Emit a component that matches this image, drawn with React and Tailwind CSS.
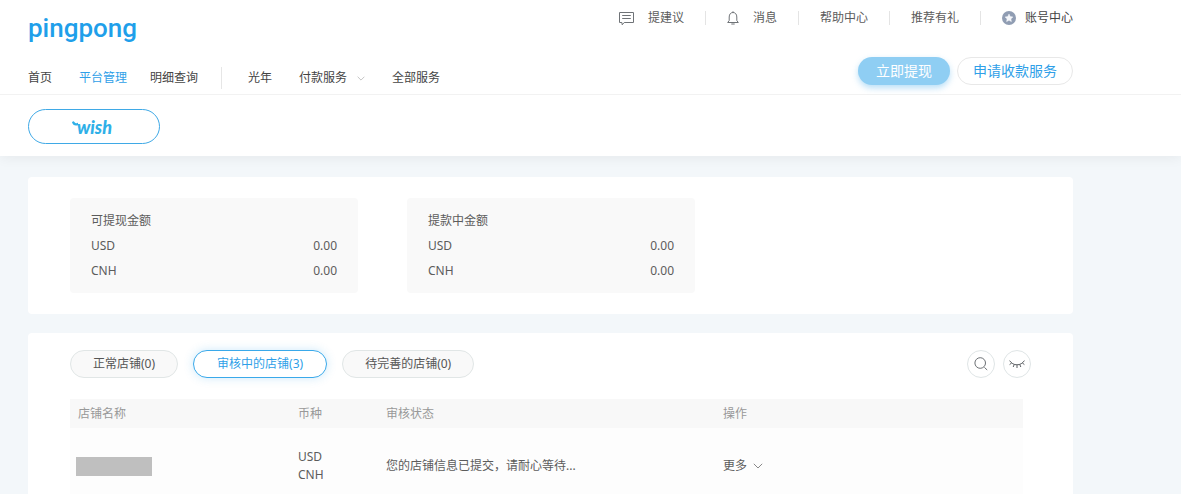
import React from "react";

const Divider = ({ tall }) => (
  <span className={tall ? "h-[22px] w-px bg-[#e6e6e6]" : "h-3.5 w-px bg-[#e4e4e4]"} />
);

const Chevron = ({ className }) => (
  <svg viewBox="0 0 10 6" className={className} fill="none" stroke="currentColor" strokeWidth="1" aria-hidden="true">
    <path d="M0.8 0.8 5 5 9.2 0.8" />
  </svg>
);

const FeedbackIcon = () => (
  <svg viewBox="0 0 15 15" className="h-[15px] w-[15px]" fill="none" stroke="#6f7377" strokeWidth="1" aria-hidden="true">
    <path d="M0.5 1.5h14v10H5.2L3.2 13.8 2.9 11.5H0.5z" />
    <path d="M3.2 4.500h8.600M3.2 7.500h8.600" />
  </svg>
);

const BellIcon = () => (
  <svg viewBox="0 0 12 14" className="h-3.5 w-3" fill="none" stroke="#6f7377" strokeWidth="1" aria-hidden="true">
    <path d="M6 0.3v1.2M2.2 9.500V6C2.2 3.200 3.8 1.500 6 1.500S9.8 3.200 9.8 6v3.500L11.300 11.500H0.700L2.200 9.500zM4.300 13h3.400" />
  </svg>
);

const StarBadge = () => (
  <svg viewBox="0 0 14 14" className="h-3.5 w-3.5" aria-hidden="true">
    <circle cx="7" cy="7" r="7" fill="#909db3" />
    <path
      d="M7 3.1 8.2 5.6 10.9 6 8.9 7.9 9.4 10.6 7 9.3 4.6 10.6 5.1 7.9 3.1 6 5.8 5.6z"
      fill="#f4f6fa"
      stroke="#f4f6fa"
      strokeWidth="0.5"
      strokeLinejoin="round"
    />
  </svg>
);

const SearchIcon = () => (
  <svg viewBox="0 0 14 14" className="h-3.5 w-3.5" fill="none" stroke="#6c7074" strokeWidth="1" aria-hidden="true">
    <circle cx="6.2" cy="6" r="5.3" />
    <path d="M10.4 10.4 13.2 13" />
  </svg>
);

const ClosedEyeIcon = () => (
  <svg viewBox="0 0 16 10" className="h-2.5 w-4" fill="none" stroke="#5c6064" strokeWidth="1" aria-hidden="true">
    <path d="M0.6 1.600C2.4 4.400 5 5.800 8 5.800s5.600-1.400 7.400-4.200M2.700 3.900 0.600 5.600M5.300 5.300 4.200 8M8 5.800v3.200M10.700 5.300l1.100 2.700M13.300 3.900l2.100 1.700" />
  </svg>
);

const Balance = ({ title }) => (
  <section className="w-72 rounded bg-[#f9f9f9] px-[21px] py-2.5 leading-[25px]">
    <h2>{title}</h2>
    <dl>
      {["USD", "CNH"].map((currency) => (
        <div key={currency} className="flex justify-between">
          <dt>{currency}</dt>
          <dd>0.00</dd>
        </div>
      ))}
    </dl>
  </section>
);

const Tab = ({ active, children }) => (
  <button
    type="button"
    className={
      active
        ? "h-7 rounded-full border border-[#3aa9ea] bg-white px-[23px] text-[#2f9fe8] shadow-[0_0_10px_rgba(58,169,234,0.25)]"
        : "h-7 rounded-full border border-[#e1e6e6] bg-[#f9f9f9] px-[22px] text-[#555]"
    }
  >
    {children}
  </button>
);

export default function App() {
  return (
    <div className="min-h-screen bg-[#f3f7fa] font-['Noto_Sans','Noto_Sans_CJK_SC',sans-serif] text-xs leading-[18px] text-[#5c5c5c]">
      <header className="bg-white shadow-[0_2px_12px_rgba(0,0,0,0.06)]">
        <div className="flex h-[95px] justify-between border-b border-[#f2f2f2] pr-27 pl-7">
          <div className="flex flex-col justify-between pt-2 pb-[5px]">
            <a
              href="#"
              className="font-['Roboto',sans-serif] text-[26px] leading-10 font-medium text-[#1f9fea]"
            >
              pingpong
            </a>
            <nav className="flex items-center gap-[23px] text-[#444]">
              <div className="flex gap-[27px]">
                <a href="#">首页</a>
                <a href="#" className="text-[#2f9fe8]">平台管理</a>
              </div>
              <a href="#">明细查询</a>
              <Divider tall />
              <div className="flex gap-[27px] pl-[3px]">
                <a href="#">光年</a>
                <button type="button" className="flex items-center gap-2.5">
                  付款服务
                  <Chevron className="h-[5px] w-2 text-[#b5b5b5]" />
                </button>
                <a href="#">全部服务</a>
              </div>
            </nav>
          </div>
          <div className="flex flex-col items-end justify-between pt-[9px] pb-[9px]">
            <div className="flex items-center gap-[21px]">
              <a href="#" className="flex items-center gap-3.5"><FeedbackIcon />提建议</a>
              <Divider />
              <a href="#" className="flex items-center gap-3.5"><BellIcon />消息</a>
              <Divider />
              <a href="#">帮助中心</a>
              <Divider />
              <a href="#">推荐有礼</a>
              <Divider />
              <a href="#" className="flex items-center gap-[9px] text-[#444]"><StarBadge />账号中心</a>
            </div>
            <div className="flex gap-[7px] text-sm">
              <button
                type="button"
                className="h-7 rounded-full bg-[#8fcef3] px-[18px] leading-7 text-white shadow-[0_3px_6px_rgba(80,175,235,0.4)]"
              >
                立即提现
              </button>
              <button type="button" className="h-7 rounded-full border border-[#e8e8e8] px-[15px] leading-6 text-[#2f9fe8]">
                申请收款服务
              </button>
            </div>
          </div>
        </div>
        <div className="px-7 pt-3.5 pb-3">
          <button
            type="button"
            className="flex h-[35px] w-33 items-center justify-center rounded-full border border-[#3fa9e6] pr-1 font-['Lato',sans-serif] text-lg font-black text-[#2fb0e8] italic"
          >
            <svg viewBox="0 0 6 7" className="-mr-px mb-1 h-[7px] w-1.5" fill="none" stroke="currentColor" strokeWidth="2.4" strokeLinecap="round" aria-hidden="true">
              <path d="M1.300 1.500Q2.500 4.200 5.600 3" />
            </svg>
            wish
          </button>
        </div>
      </header>

      <main className="flex flex-col gap-[19px] pt-[21px] pr-27 pl-7">
        <div className="flex gap-[49px] rounded-sm bg-white px-[42px] py-[21px]">
          <Balance title="可提现金额" />
          <Balance title="提款中金额" />
        </div>

        <div className="rounded-t-sm bg-white px-[42px] pt-[17px]">
          <div className="flex items-center justify-between">
            <div className="flex gap-[15px]">
              <Tab>正常店铺(0)</Tab>
              <Tab active>审核中的店铺(3)</Tab>
              <Tab>待完善的店铺(0)</Tab>
            </div>
            <div className="flex gap-2">
              <button type="button" aria-label="搜索" className="flex size-7 items-center justify-center rounded-full border border-[#dfe5e6]">
                <SearchIcon />
              </button>
              <button type="button" aria-label="隐藏" className="flex size-7 items-center justify-center rounded-full border border-[#dfe5e6]">
                <ClosedEyeIcon />
              </button>
            </div>
          </div>

          <div className="pt-[21px] pr-2">
            <table className="w-full table-fixed text-left">
              <colgroup>
                <col className="w-[220px]" />
                <col className="w-22" />
                <col className="w-[337px]" />
                <col />
              </colgroup>
              <thead className="bg-[#f8f8f8] text-[#999]">
                <tr className="h-[29px]">
                  <th className="px-2 font-normal">店铺名称</th>
                  <th className="px-2 font-normal">币种</th>
                  <th className="px-2 font-normal">审核状态</th>
                  <th className="px-2 font-normal">操作</th>
                </tr>
              </thead>
              <tbody className="bg-[#fdfdfd]">
                <tr className="h-[76px]">
                  <td className="px-1.5"><div className="h-[19px] w-19 bg-[#bfbfbf]" /></td>
                  <td className="px-2">USD<br />CNH</td>
                  <td className="px-2">您的店铺信息已提交，请耐心等待...</td>
                  <td className="px-2">
                    <button type="button" className="flex items-center gap-1.5">
                      更多
                      <Chevron className="h-1.5 w-2.5 text-[#888]" />
                    </button>
                  </td>
                </tr>
              </tbody>
            </table>
          </div>
        </div>
      </main>
    </div>
  );
}
